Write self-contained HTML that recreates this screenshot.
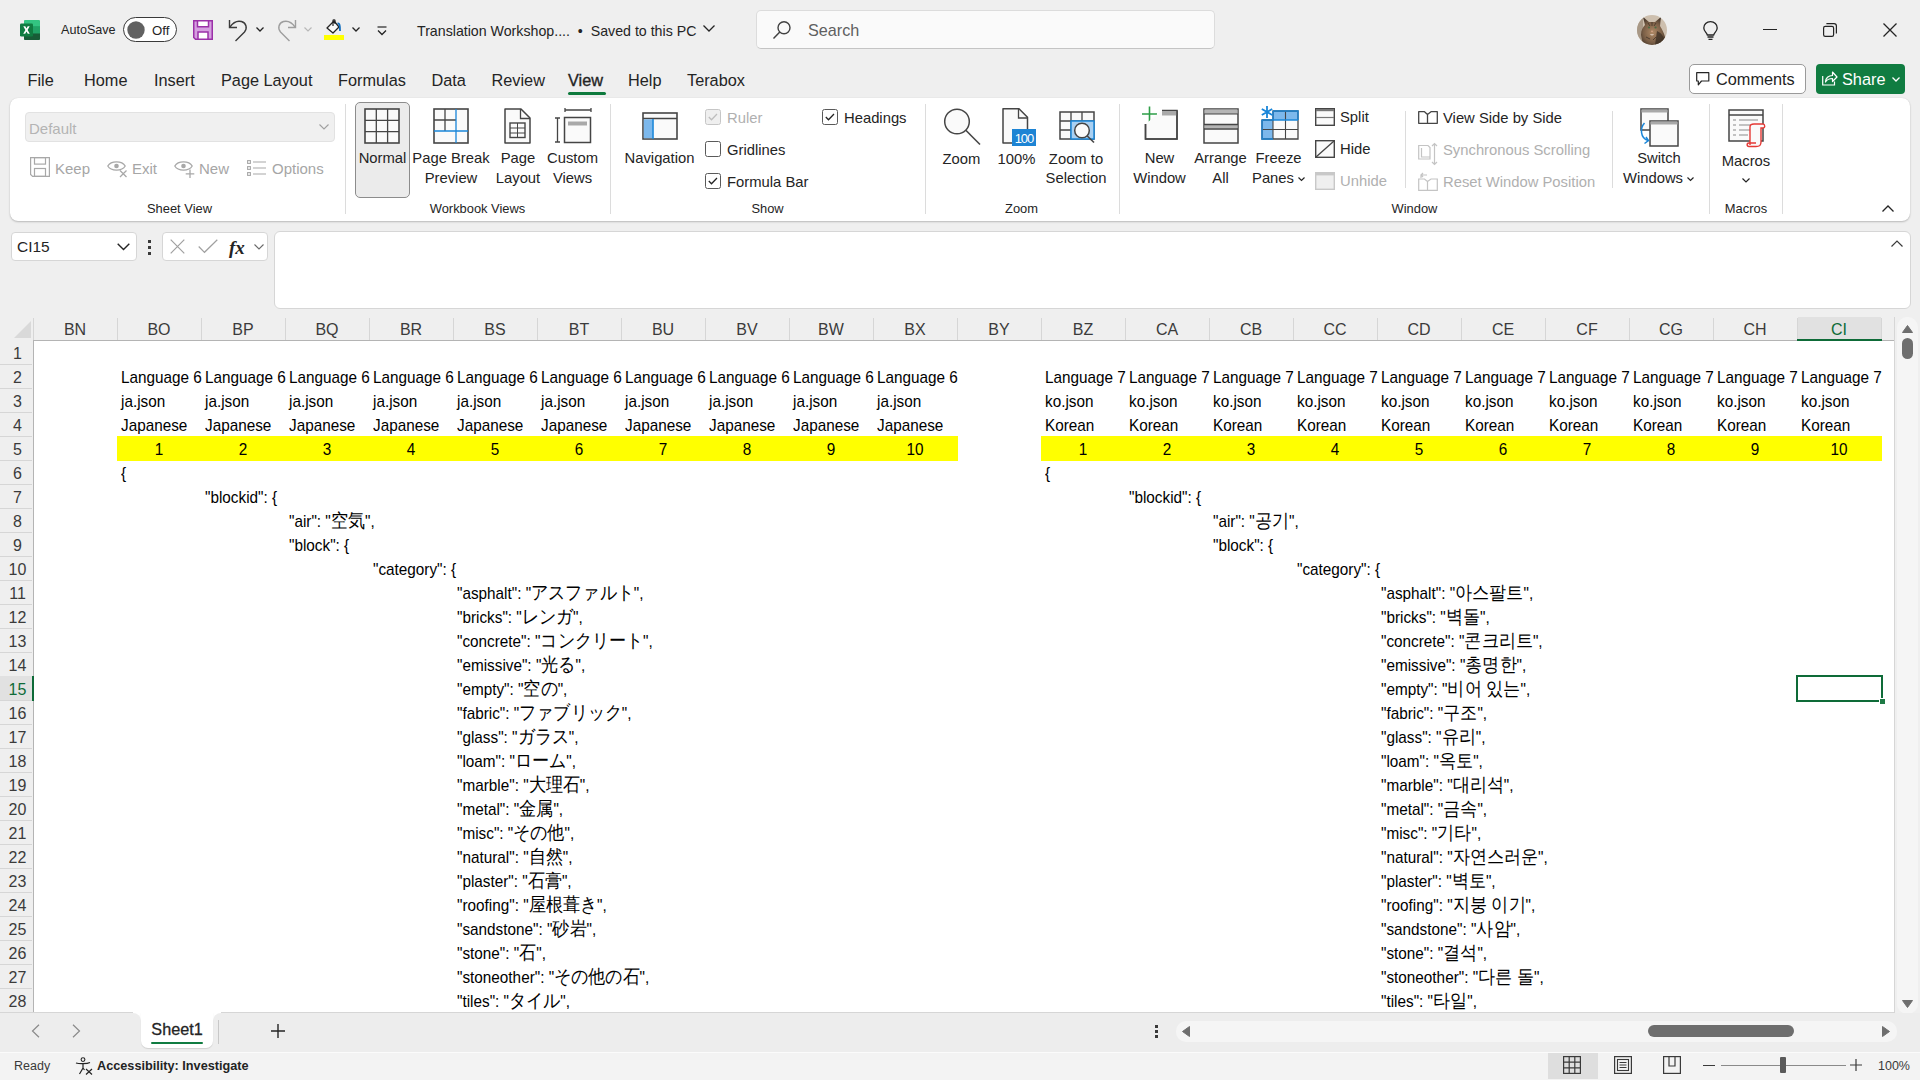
<!DOCTYPE html>
<html><head><meta charset="utf-8">
<style>
*{margin:0;padding:0;box-sizing:border-box}
html,body{width:1920px;height:1080px;overflow:hidden;background:#efefef;font-family:"Liberation Sans",sans-serif;color:#242424;position:relative}
.a{position:absolute}
.t{position:absolute;white-space:nowrap;line-height:1}
svg{position:absolute;overflow:visible}
.j{font-size:18.5px;line-height:0}
</style></head><body>

<svg style="left:20px;top:20px" width="20" height="20" viewBox="0 0 20 20">
<rect x="4" y="0" width="16" height="20" rx="1.6" fill="#21a366"/>
<path d="M5.6 0 H18.4 C19.3 0 20 0.7 20 1.6 V6.6 H4 V1.6 C4 0.7 4.7 0 5.6 0 Z" fill="#33c481"/>
<rect x="4" y="6.6" width="16" height="6.7" fill="#21a366"/>
<path d="M4 13.3 H20 V18.4 C20 19.3 19.3 20 18.4 20 H5.6 C4.7 20 4 19.3 4 18.4 Z" fill="#185c37"/>
<rect x="12" y="6.6" width="8" height="6.7" fill="#21a366"/>
<rect x="0" y="3.4" width="13" height="13.2" rx="1.3" fill="#107c41"/>
<path d="M3.3 6.3 H5.3 L6.5 8.6 L7.7 6.3 H9.7 L7.6 10 L9.8 13.7 H7.8 L6.5 11.4 L5.2 13.7 H3.2 L5.4 10 Z" fill="#fff"/>
</svg>
<div class="t" style="left:61px;top:24.3px;font-size:12.6px;color:#242424;">AutoSave</div>
<div class="a" style="left:123px;top:17px;width:54px;height:25px;border:1px solid #3a3a3a;border-radius:13px;background:#fff"></div>
<svg style="left:127px;top:21px" width="18" height="18" viewBox="0 0 18 18"><circle cx="9" cy="9" r="8.7" fill="#616161"/></svg>
<div class="t" style="left:152px;top:23.8px;font-size:13.2px;color:#242424;">Off</div>
<svg style="left:193px;top:20px" width="20" height="20" viewBox="0 0 20 20">
<path d="M0.75 0.75 H19.25 V19.25 H2.5 L0.75 17.5 Z" fill="#d59fe0" stroke="#9b30a8" stroke-width="1.5"/>
<rect x="4.5" y="0.75" width="11" height="6" fill="#fff" stroke="#9b30a8" stroke-width="1.5"/>
<rect x="5" y="12" width="10" height="7.25" fill="#fff" stroke="#9b30a8" stroke-width="1.5"/>
</svg>
<svg style="left:228px;top:19px" width="20" height="22" viewBox="0 0 20 22"><path d="M1.5 1 V8.5 H9" fill="none" stroke="#3b3b3b" stroke-width="1.4"/><path d="M2 8 C5 3.5 9.5 1.5 13.5 2.5 C18.5 4 19.5 9.5 16.5 13 L7.5 22" fill="none" stroke="#3b3b3b" stroke-width="1.4"/></svg>
<svg style="left:256px;top:27px" width="8" height="5" viewBox="0 0 8 5"><path d="M0.5 0.5 L4 4 L7.5 0.5" fill="none" stroke="#242424" stroke-width="1.3"/></svg>
<svg style="left:277px;top:19px" width="20" height="22" viewBox="0 0 20 22"><path d="M18.5 1 V8.5 H11" fill="none" stroke="#9e9e9e" stroke-width="1.4"/><path d="M18 8 C15 3.5 10.5 1.5 6.5 2.5 C1.5 4 0.5 9.5 3.5 13 L12.5 22" fill="none" stroke="#9e9e9e" stroke-width="1.4"/></svg>
<svg style="left:304px;top:27px" width="8" height="5" viewBox="0 0 8 5"><path d="M0.5 0.5 L4 4 L7.5 0.5" fill="none" stroke="#b8b8b8" stroke-width="1.2"/></svg>
<svg style="left:324px;top:19px" width="21" height="22" viewBox="0 0 21 22">
<path d="M3 9 L10 2 L15 8 L9 14 Z" fill="#fafafa" stroke="#242424" stroke-width="1.3" stroke-linejoin="round"/>
<path d="M9 7 V1.5 C9 0.5 11 0.5 11 1.5 V5" fill="none" stroke="#242424" stroke-width="1.2"/>
<path d="M13.5 4.5 C15.5 4 16 6 16 12" fill="none" stroke="#0f6cbd" stroke-width="1.8"/>
<rect x="0" y="16" width="20" height="5" fill="#ffff00"/>
</svg>
<svg style="left:352px;top:27px" width="8" height="5" viewBox="0 0 8 5"><path d="M0.5 0.5 L4 4 L7.5 0.5" fill="none" stroke="#242424" stroke-width="1.3"/></svg>
<svg style="left:377px;top:26px" width="10" height="10" viewBox="0 0 10 10"><path d="M0.5 1 H9.5" stroke="#242424" stroke-width="1.2"/><path d="M1 4.5 L5 8.5 L9 4.5" fill="none" stroke="#242424" stroke-width="1.3"/></svg>
<div class="t" style="left:417px;top:24.0px;font-size:14.2px;color:#242424;">Translation Workshop.... &nbsp;•&nbsp; Saved to this PC</div>
<svg style="left:703px;top:25px" width="12" height="7" viewBox="0 0 12 7"><path d="M0.5 0.5 L6 6 L11.5 0.5" fill="none" stroke="#242424" stroke-width="1.3"/></svg>
<div class="a" style="left:756px;top:10px;width:459px;height:39px;background:#fafafa;border:1px solid #dcdcdc;border-bottom-color:#c4c4c4;border-radius:5px"></div>
<svg style="left:773px;top:21px" width="18" height="18" viewBox="0 0 18 18"><circle cx="11" cy="6.8" r="6" fill="none" stroke="#424242" stroke-width="1.4"/><path d="M6.8 11 L0.5 17.5" stroke="#424242" stroke-width="1.5"/></svg>
<div class="t" style="left:808px;top:21.8px;font-size:16.2px;color:#5f5f5f;">Search</div>
<svg style="left:1637px;top:15px" width="30" height="30" viewBox="0 0 30 30"><defs><clipPath id="av"><circle cx="15" cy="15" r="15"/></clipPath>
<radialGradient id="cg" cx="45%" cy="55%" r="60%"><stop offset="0" stop-color="#b08a66"/><stop offset="0.6" stop-color="#7a5f47"/><stop offset="1" stop-color="#3c2f25"/></radialGradient></defs>
<g clip-path="url(#av)">
<rect width="30" height="30" fill="#cdbfae"/>
<rect x="0" y="0" width="6" height="30" fill="#a89886"/>
<path d="M6 30 L4 20 C4 15 6 12 8 10 L6 2 L12 7 L18 7 L24 2 L23 11 C25 14 27 18 28 22 L30 30 Z" fill="url(#cg)"/>
<path d="M20 16 C25 18 28 23 28 30 L18 30 Z" fill="#3a2d23" opacity=".75"/>
<circle cx="12" cy="12.5" r="1.1" fill="#4d6b45"/><circle cx="18.5" cy="12.5" r="1.1" fill="#4d6b45"/>
<path d="M15 15 L14 17 H16 Z" fill="#d9a68a"/>
<path d="M13 19 C14 21 16 21 17 19" fill="#e8dcd0" opacity=".7"/>
<path d="M11 8 L13 11 M15 7 V11 M19 8 L17 11 M9 22 L13 24 M19 22 L16 25" stroke="#3a2d23" stroke-width="1" opacity=".7"/>
</g></svg>
<svg style="left:1703px;top:21px" width="15" height="19" viewBox="0 0 15 19"><path d="M7.5 0.7 C3.5 0.7 0.8 3.6 0.8 7 C0.8 9.6 2.5 11 3.7 12.6 L4.3 14 H10.7 L11.3 12.6 C12.5 11 14.2 9.6 14.2 7 C14.2 3.6 11.5 0.7 7.5 0.7 Z" fill="none" stroke="#242424" stroke-width="1.3"/><path d="M4.5 16 H10.5 M5.5 18.3 H9.5" stroke="#242424" stroke-width="1.3"/></svg>
<div class="a" style="left:1763px;top:29px;width:14px;height:1.3px;background:#242424"></div>
<svg style="left:1823px;top:23px" width="14" height="14" viewBox="0 0 14 14"><rect x="0.6" y="3.4" width="10" height="10" rx="1.6" fill="none" stroke="#242424" stroke-width="1.2"/><path d="M3.4 0.6 H11 C12.3 0.6 13.4 1.7 13.4 3 V10.6" fill="none" stroke="#242424" stroke-width="1.2"/></svg>
<svg style="left:1883px;top:23px" width="14" height="14" viewBox="0 0 14 14"><path d="M0.5 0.5 L13.5 13.5 M13.5 0.5 L0.5 13.5" stroke="#242424" stroke-width="1.3"/></svg>
<div class="t" style="left:27.5px;top:72.2px;font-size:16.3px;color:#242424;">File</div>
<div class="t" style="left:84px;top:72.2px;font-size:16.3px;color:#242424;">Home</div>
<div class="t" style="left:154px;top:72.2px;font-size:16.3px;color:#242424;">Insert</div>
<div class="t" style="left:221px;top:72.2px;font-size:16.3px;color:#242424;">Page Layout</div>
<div class="t" style="left:338px;top:72.2px;font-size:16.3px;color:#242424;">Formulas</div>
<div class="t" style="left:431.5px;top:72.2px;font-size:16.3px;color:#242424;">Data</div>
<div class="t" style="left:491.5px;top:72.2px;font-size:16.3px;color:#242424;">Review</div>
<div class="t" style="left:568px;top:72.2px;font-size:16.3px;color:#242424;-webkit-text-stroke:0.35px #242424;">View</div>
<div class="t" style="left:628px;top:72.2px;font-size:16.3px;color:#242424;">Help</div>
<div class="t" style="left:687px;top:72.2px;font-size:16.3px;color:#242424;">Terabox</div>
<div class="a" style="left:568px;top:92px;width:38px;height:3px;background:#0e7a3d;border-radius:2px"></div>
<div class="a" style="left:1689px;top:64px;width:117px;height:30px;background:#fff;border:1px solid #9a9a9a;border-radius:5px"></div>
<svg style="left:1696px;top:72px" width="14" height="14" viewBox="0 0 14 14"><path d="M0.7 0.7 H12.8 V9 H5.5 L2.3 12.8 V9 H0.7 Z" fill="none" stroke="#242424" stroke-width="1.2" stroke-linejoin="round"/></svg>
<div class="t" style="left:1716px;top:71.2px;font-size:16.3px;color:#242424;">Comments</div>
<div class="a" style="left:1816px;top:64px;width:89px;height:30px;background:#107c41;border-radius:4px"></div>
<svg style="left:1822px;top:71px" width="16" height="15" viewBox="0 0 16 15"><path d="M0.7 5 V14 H12.5 V10.5" fill="none" stroke="#fff" stroke-width="1.2"/><path d="M3.5 11 C3.5 7 6.5 4.5 10.5 4.5 V1 L15 6 L10.5 10.5 V7.5 C7.5 7.5 5 8.5 3.5 11 Z" fill="none" stroke="#fff" stroke-width="1.2" stroke-linejoin="round"/></svg>
<div class="t" style="left:1842px;top:71.2px;font-size:16.3px;color:#fff;">Share</div>
<svg style="left:1892px;top:77px" width="8" height="5" viewBox="0 0 8 5"><path d="M0.5 0.5 L4 4 L7.5 0.5" fill="none" stroke="#fff" stroke-width="1.3"/></svg>
<div class="a" style="left:10px;top:98px;width:1900px;height:123px;background:#fff;border-radius:8px;box-shadow:0 1px 2px rgba(0,0,0,.22),0 0 1px rgba(0,0,0,.12)"></div>
<div class="a" style="left:25px;top:112px;width:310px;height:30px;background:#f0f0f0;border:1px solid #e2e2e2;border-radius:4px"></div>
<div class="t" style="left:29px;top:120.8px;font-size:15px;color:#b4b4b4;">Default</div>
<svg style="left:319px;top:124px" width="10" height="6" viewBox="0 0 10 6"><path d="M0.5 0.5 L5 5 L9.5 0.5" fill="none" stroke="#a0a0a0" stroke-width="1.1"/></svg>
<svg style="left:30px;top:157px" width="20" height="20" viewBox="0 0 20 20"><path d="M0.6 0.6 H19.4 V19.4 H2.6 L0.6 17.4 Z" fill="none" stroke="#a8a8a8" stroke-width="1.2"/><rect x="4.5" y="0.6" width="11" height="6.5" fill="none" stroke="#a8a8a8" stroke-width="1.2"/><rect x="4.5" y="11.5" width="11" height="7.9" fill="none" stroke="#a8a8a8" stroke-width="1.2"/></svg>
<div class="t" style="left:55px;top:160.8px;font-size:15px;color:#a6a6a6;">Keep</div>
<svg style="left:107px;top:160px" width="21" height="18" viewBox="0 0 21 18"><path d="M0.8 6 C4 0.5 15 0.5 18.2 6 C15 11.5 4 11.5 0.8 6 Z" fill="none" stroke="#a8a8a8" stroke-width="1.3"/><circle cx="9.5" cy="6" r="2.3" fill="#a8a8a8"/><path d="M13 10.5 L19.5 17 M19.5 10.5 L13 17" stroke="#a8a8a8" stroke-width="1.3"/></svg>
<div class="t" style="left:132px;top:160.8px;font-size:15px;color:#a6a6a6;">Exit</div>
<svg style="left:174px;top:160px" width="21" height="18" viewBox="0 0 21 18"><path d="M0.8 6 C4 0.5 15 0.5 18.2 6 C15 11.5 4 11.5 0.8 6 Z" fill="none" stroke="#a8a8a8" stroke-width="1.3"/><circle cx="9.5" cy="6" r="2.3" fill="#a8a8a8"/><path d="M16 9.5 V18 M11.7 13.8 H20.3" stroke="#a8a8a8" stroke-width="1.3"/></svg>
<div class="t" style="left:199px;top:160.8px;font-size:15px;color:#a6a6a6;">New</div>
<svg style="left:247px;top:160px" width="20" height="16" viewBox="0 0 20 16"><rect x="0.6" y="0.6" width="2.8" height="2.8" fill="none" stroke="#a8a8a8" stroke-width="1.1"/><rect x="0.6" y="6.6" width="2.8" height="2.8" fill="none" stroke="#a8a8a8" stroke-width="1.1"/><rect x="0.6" y="12.6" width="2.8" height="2.8" fill="none" stroke="#a8a8a8" stroke-width="1.1"/><path d="M6 2 H19 M6 8 H19 M6 14 H19" stroke="#a8a8a8" stroke-width="1.2"/></svg>
<div class="t" style="left:272px;top:160.8px;font-size:15px;color:#a6a6a6;">Options</div>
<div class="t" style="left:179.5px;top:203.1px;font-size:12.9px;color:#242424;transform:translateX(-50%);">Sheet View</div>
<div class="a" style="left:345px;top:104px;width:1px;height:110px;background:#dcdcdc"></div>
<div class="a" style="left:355px;top:102px;width:55px;height:96px;background:#ebebeb;border:1px solid #8c8c8c;border-radius:5px"></div>
<svg style="left:364px;top:108px" width="36" height="36" viewBox="0 0 36 36"><rect x="1" y="1" width="34" height="34" fill="#fafafa" stroke="#454545" stroke-width="1.6"/><path d="M12.3 1 V35 M23.6 1 V35 M1 12.3 H35 M1 23.6 H35" stroke="#454545" stroke-width="1.3"/></svg>
<div class="t" style="left:382.5px;top:151.1px;font-size:14.8px;color:#242424;transform:translateX(-50%);">Normal</div>
<svg style="left:433px;top:108px" width="36" height="36" viewBox="0 0 36 36"><rect x="1" y="1" width="34" height="34" fill="#fafafa" stroke="#454545" stroke-width="1.6"/><path d="M12 1 V23 M1 12 H23" stroke="#454545" stroke-width="1.3"/><path d="M23 1 V35 M1 23 H35" stroke="#1a86d9" stroke-width="1.3"/></svg>
<div class="t" style="left:451px;top:151.1px;font-size:14.8px;color:#242424;transform:translateX(-50%);">Page Break</div>
<div class="t" style="left:451px;top:171.0px;font-size:14.8px;color:#242424;transform:translateX(-50%);">Preview</div>
<svg style="left:504px;top:108px" width="27" height="36" viewBox="0 0 27 36"><path d="M1 1 H17 L26 10 V35 H1 Z" fill="#fafafa" stroke="#454545" stroke-width="1.5" stroke-linejoin="round"/><path d="M16.5 1 V10.5 H26" fill="none" stroke="#454545" stroke-width="1.3"/><rect x="6" y="15" width="15" height="14.5" fill="none" stroke="#454545" stroke-width="1.4"/><path d="M13.5 15 V29.5 M6 20 H21 M6 25 H21" stroke="#454545" stroke-width="1"/></svg>
<div class="t" style="left:518px;top:151.1px;font-size:14.8px;color:#242424;transform:translateX(-50%);">Page</div>
<div class="t" style="left:518px;top:171.0px;font-size:14.8px;color:#242424;transform:translateX(-50%);">Layout</div>
<svg style="left:555px;top:108px" width="37" height="37" viewBox="0 0 37 37"><path d="M10 2 H36 M10 0 V4 M36 0 V4" stroke="#454545" stroke-width="1.3"/><path d="M0 10 H5 M2.5 10 V34 M0 34 H5" stroke="#454545" stroke-width="1.3"/><rect x="9.5" y="9.5" width="26" height="25" fill="#fafafa" stroke="#454545" stroke-width="1.5"/><rect x="13" y="13.5" width="19" height="4" fill="#a9a9a9"/></svg>
<div class="t" style="left:572.5px;top:151.1px;font-size:14.8px;color:#242424;transform:translateX(-50%);">Custom</div>
<div class="t" style="left:572.5px;top:171.0px;font-size:14.8px;color:#242424;transform:translateX(-50%);">Views</div>
<div class="t" style="left:477.5px;top:202.6px;font-size:12.9px;color:#242424;transform:translateX(-50%);">Workbook Views</div>
<div class="a" style="left:610px;top:104px;width:1px;height:110px;background:#dcdcdc"></div>
<svg style="left:642px;top:112px" width="36" height="28" viewBox="0 0 36 28"><rect x="1" y="1" width="34" height="26" fill="#fafafa" stroke="#454545" stroke-width="1.6"/><path d="M1 6.5 H35" stroke="#454545" stroke-width="1.3"/><rect x="1.8" y="7.3" width="9" height="18.9" fill="#7cb8ec"/><path d="M11 7 V27" stroke="#1a86d9" stroke-width="1.6"/></svg>
<div class="t" style="left:659.5px;top:151.0px;font-size:14.8px;color:#242424;transform:translateX(-50%);">Navigation</div>
<svg style="left:705px;top:109px" width="16" height="16" viewBox="0 0 16 16"><rect x="0.5" y="0.5" width="15" height="15" rx="2" fill="#efefef" stroke="#c6c6c6" stroke-width="1"/><path d="M3.8 8 L6.5 10.7 L12 5" fill="none" stroke="#bdbdbd" stroke-width="1.3"/></svg>
<div class="t" style="left:727px;top:111.0px;font-size:14.8px;color:#b0b0b0;">Ruler</div>
<svg style="left:705px;top:141px" width="16" height="16" viewBox="0 0 16 16"><rect x="0.5" y="0.5" width="15" height="15" rx="2" fill="#fff" stroke="#5a5a5a" stroke-width="1"/></svg>
<div class="t" style="left:727px;top:142.5px;font-size:14.8px;color:#242424;">Gridlines</div>
<svg style="left:705px;top:173px" width="16" height="16" viewBox="0 0 16 16"><rect x="0.5" y="0.5" width="15" height="15" rx="2" fill="#fff" stroke="#5a5a5a" stroke-width="1"/><path d="M3.8 8 L6.5 10.7 L12 5" fill="none" stroke="#242424" stroke-width="1.3"/></svg>
<div class="t" style="left:727px;top:174.5px;font-size:14.8px;color:#242424;">Formula Bar</div>
<svg style="left:822px;top:109px" width="16" height="16" viewBox="0 0 16 16"><rect x="0.5" y="0.5" width="15" height="15" rx="2" fill="#fff" stroke="#5a5a5a" stroke-width="1"/><path d="M3.8 8 L6.5 10.7 L12 5" fill="none" stroke="#242424" stroke-width="1.3"/></svg>
<div class="t" style="left:844px;top:111.0px;font-size:14.8px;color:#242424;">Headings</div>
<div class="t" style="left:767.5px;top:202.6px;font-size:12.9px;color:#242424;transform:translateX(-50%);">Show</div>
<div class="a" style="left:925px;top:104px;width:1px;height:110px;background:#dcdcdc"></div>
<svg style="left:944px;top:108px" width="37" height="38" viewBox="0 0 37 38"><circle cx="13" cy="13.5" r="12.3" fill="#fafafa" stroke="#454545" stroke-width="1.5"/><path d="M21.8 22.3 L36 36.5" stroke="#454545" stroke-width="1.6"/></svg>
<div class="t" style="left:961.5px;top:151.5px;font-size:14.8px;color:#242424;transform:translateX(-50%);">Zoom</div>
<svg style="left:1002px;top:108px" width="35" height="40" viewBox="0 0 35 40"><path d="M1 0.8 H17 L25.5 9.3 V35 H1 Z" fill="#fafafa" stroke="#454545" stroke-width="1.5" stroke-linejoin="round"/><path d="M16.5 0.8 V10 H25.5" fill="none" stroke="#454545" stroke-width="1.3"/><rect x="10" y="21" width="24" height="17" fill="#1d84d4"/><text x="22" y="34.5" font-size="13" fill="#fff" text-anchor="middle" font-family="Liberation Sans" letter-spacing="-1">100</text></svg>
<div class="t" style="left:1016.5px;top:151.5px;font-size:14.8px;color:#242424;transform:translateX(-50%);">100%</div>
<svg style="left:1059px;top:111px" width="38" height="37" viewBox="0 0 38 37"><rect x="1" y="1" width="34" height="27" fill="#fafafa" stroke="#454545" stroke-width="1.5"/><path d="M12 1 V28 M23 1 V10 M1 10 H35 M1 19 H12" stroke="#454545" stroke-width="1.3"/><rect x="12" y="10" width="23" height="18" fill="#a9d0f2"/><path d="M12 10 H35 V28 H12 Z" fill="none" stroke="#1a86d9" stroke-width="1.5"/><circle cx="23" cy="19.5" r="7.3" fill="#fafafa" stroke="#454545" stroke-width="1.5"/><path d="M28.3 25 L35 31.5" stroke="#454545" stroke-width="1.6"/></svg>
<div class="t" style="left:1076px;top:151.5px;font-size:14.8px;color:#242424;transform:translateX(-50%);">Zoom to</div>
<div class="t" style="left:1076px;top:171.0px;font-size:14.8px;color:#242424;transform:translateX(-50%);">Selection</div>
<div class="t" style="left:1021.5px;top:202.6px;font-size:12.9px;color:#242424;transform:translateX(-50%);">Zoom</div>
<div class="a" style="left:1119px;top:104px;width:1px;height:110px;background:#dcdcdc"></div>
<svg style="left:1140px;top:106px" width="38" height="34" viewBox="0 0 38 34"><path d="M2 8 H17 M9.5 0.5 V16" stroke="#2e9e48" stroke-width="1.6"/><path d="M5.5 18 V33 H37 V4.5 H22" fill="#fafafa" stroke="#454545" stroke-width="1.5"/><rect x="22" y="5" width="15" height="4.5" fill="#a9a9a9"/><path d="M5.5 18 V33 H37 V4.5" fill="none" stroke="#454545" stroke-width="1.5"/></svg>
<div class="t" style="left:1159.5px;top:151.1px;font-size:14.8px;color:#242424;transform:translateX(-50%);">New</div>
<div class="t" style="left:1159.5px;top:171.1px;font-size:14.8px;color:#242424;transform:translateX(-50%);">Window</div>
<svg style="left:1203px;top:108px" width="36" height="36" viewBox="0 0 36 36"><rect x="1" y="1" width="34" height="34" fill="#fafafa" stroke="#454545" stroke-width="1.5"/><rect x="1.5" y="1.5" width="33" height="4.5" fill="#b5b5b5"/><path d="M1 6 H35" stroke="#454545" stroke-width="1.2"/><rect x="1.5" y="16.5" width="33" height="4" fill="#b5b5b5"/><path d="M1 16.5 H35 M1 21 H35" stroke="#454545" stroke-width="1.3"/></svg>
<div class="t" style="left:1220.5px;top:151.1px;font-size:14.8px;color:#242424;transform:translateX(-50%);">Arrange</div>
<div class="t" style="left:1220.5px;top:171.1px;font-size:14.8px;color:#242424;transform:translateX(-50%);">All</div>
<svg style="left:1260px;top:105px" width="39" height="36" viewBox="0 0 39 36"><rect x="13" y="6" width="25" height="28" fill="#fafafa"/><rect x="13" y="6" width="25" height="9" fill="#7cb8ec"/><rect x="2" y="15" width="11" height="19" fill="#7cb8ec"/><path d="M13 6 H38 V34 H2 V15 H13 Z" fill="none" stroke="#454545" stroke-width="1.3"/><path d="M25.5 6 V34 M2 24.5 H38 M13 15 V34" stroke="#454545" stroke-width="1.1"/><path d="M2 15 H38 M13 6 V15" stroke="#1a86d9" stroke-width="1.4"/><path d="M2 15 V34 H13 M13 6 H38 V15" fill="none" stroke="#1a86d9" stroke-width="1.4"/><path d="M7 1 V13 M1.8 4 L12.2 10 M1.8 10 L12.2 4" stroke="#1a86d9" stroke-width="1.8"/></svg>
<div class="t" style="left:1278.5px;top:151.1px;font-size:14.8px;color:#242424;transform:translateX(-50%);">Freeze</div>
<div class="t" style="left:1273px;top:171.1px;font-size:14.8px;color:#242424;transform:translateX(-50%);">Panes</div>
<svg style="left:1298px;top:177px" width="7" height="5" viewBox="0 0 7 5"><path d="M0.5 0.5 L3.5 3.5 L6.5 0.5" fill="none" stroke="#242424" stroke-width="1.2"/></svg>
<svg style="left:1315px;top:108px" width="20" height="18" viewBox="0 0 20 18"><rect x="0.7" y="0.7" width="18.6" height="16.6" fill="#fafafa" stroke="#454545" stroke-width="1.4"/><rect x="1" y="1" width="18" height="2.2" fill="#777"/><path d="M1 9.5 H19" stroke="#777" stroke-width="1.2"/></svg>
<div class="t" style="left:1340px;top:110.0px;font-size:14.8px;color:#242424;">Split</div>
<svg style="left:1315px;top:140px" width="20" height="18" viewBox="0 0 20 18"><rect x="0.7" y="0.7" width="18.6" height="16.6" fill="#fafafa" stroke="#454545" stroke-width="1.4"/><path d="M1 17 L19 1" stroke="#454545" stroke-width="1.3"/></svg>
<div class="t" style="left:1340px;top:142.0px;font-size:14.8px;color:#242424;">Hide</div>
<svg style="left:1315px;top:172px" width="20" height="18" viewBox="0 0 20 18"><rect x="0.7" y="0.7" width="18.6" height="16.6" fill="#efefef" stroke="#c8c8c8" stroke-width="1.4"/><rect x="1" y="1" width="18" height="2.4" fill="#c8c8c8"/></svg>
<div class="t" style="left:1340px;top:174.0px;font-size:14.8px;color:#b0b0b0;">Unhide</div>
<div class="a" style="left:1405px;top:111px;width:1px;height:77px;background:#dcdcdc"></div>
<svg style="left:1418px;top:111px" width="20" height="13" viewBox="0 0 20 13"><path d="M0.7 0.7 H6.5 L9.5 3.5 V12.3 H0.7 Z M9.5 3.5 V12.3 H19.3 V0.7 H13 L9.5 3.5" fill="none" stroke="#454545" stroke-width="1.3" stroke-linejoin="round"/></svg>
<div class="t" style="left:1443px;top:111.0px;font-size:14.8px;color:#242424;">View Side by Side</div>
<svg style="left:1418px;top:143px" width="20" height="22" viewBox="0 0 20 22"><path d="M0.7 2.5 H10 L12 4.5 V16 H0.7 Z" fill="none" stroke="#c4c4c4" stroke-width="1.2"/><path d="M3.5 5 V14 H12" fill="none" stroke="#c4c4c4" stroke-width="1.2"/><path d="M16.5 0.5 V21.5 M14 3 L16.5 0.5 L19 3 M14 19 L16.5 21.5 L19 19" fill="none" stroke="#c4c4c4" stroke-width="1.2"/></svg>
<div class="t" style="left:1443px;top:142.5px;font-size:14.8px;color:#b0b0b0;">Synchronous Scrolling</div>
<svg style="left:1418px;top:173px" width="20" height="18" viewBox="0 0 20 18"><path d="M0.7 6 H6.5 L9.5 8.5 V17.3 H0.7 Z M9.5 8.5 V17.3 H19.3 V6 H13 L9.5 8.5" fill="none" stroke="#c4c4c4" stroke-width="1.2"/><path d="M3 5 V2 H9 M5 0 L3 2 L5 4" fill="none" stroke="#c4c4c4" stroke-width="1.2"/></svg>
<div class="t" style="left:1443px;top:174.5px;font-size:14.8px;color:#b0b0b0;">Reset Window Position</div>
<div class="a" style="left:1612px;top:111px;width:1px;height:77px;background:#dcdcdc"></div>
<svg style="left:1640px;top:108px" width="39" height="40" viewBox="0 0 39 40"><rect x="1" y="1" width="27" height="21" fill="#fafafa" stroke="#454545" stroke-width="1.5"/><rect x="1.5" y="1.5" width="26" height="3" fill="#a9a9a9"/><rect x="10" y="13" width="28" height="25" fill="#fafafa" stroke="#454545" stroke-width="1.5"/><rect x="10.5" y="13.5" width="27" height="3" fill="#a9a9a9"/><path d="M4.5 15 C0 20 0 30 8 32.5 M6 29 L8.5 32.5 L4.5 35.5" fill="none" stroke="#1a86d9" stroke-width="1.5"/></svg>
<div class="t" style="left:1659px;top:151.1px;font-size:14.8px;color:#242424;transform:translateX(-50%);">Switch</div>
<div class="t" style="left:1653px;top:171.1px;font-size:14.8px;color:#242424;transform:translateX(-50%);">Windows</div>
<svg style="left:1687px;top:177px" width="7" height="5" viewBox="0 0 7 5"><path d="M0.5 0.5 L3.5 3.5 L6.5 0.5" fill="none" stroke="#242424" stroke-width="1.2"/></svg>
<div class="t" style="left:1414.5px;top:202.6px;font-size:12.9px;color:#242424;transform:translateX(-50%);">Window</div>
<div class="a" style="left:1709px;top:104px;width:1px;height:110px;background:#dcdcdc"></div>
<svg style="left:1728px;top:109px" width="38" height="38" viewBox="0 0 38 38"><rect x="1" y="1" width="34" height="31" fill="#fafafa" stroke="#454545" stroke-width="1.5"/><path d="M1 6 H35" stroke="#454545" stroke-width="1.3"/><path d="M5 11 H8 M11 11 H30 M5 16 H8 M11 16 H27 M5 21 H8 M11 21 H22 M5 26 H8 M11 26 H20" stroke="#8a8a8a" stroke-width="1.2"/><path d="M22 36 V18 C22 16 24 15 26 15 H35 C37 15 37.5 19 35 19 H33 V33 C33 37 31 37.5 28 37.5 H21 C18.5 37.5 18.5 34 21 34 H28" fill="#fafafa" stroke="#e53935" stroke-width="1.4"/></svg>
<div class="t" style="left:1746px;top:154.0px;font-size:14.8px;color:#242424;transform:translateX(-50%);">Macros</div>
<svg style="left:1742px;top:178px" width="8" height="5" viewBox="0 0 8 5"><path d="M0.5 0.5 L4 4 L7.5 0.5" fill="none" stroke="#242424" stroke-width="1.2"/></svg>
<div class="t" style="left:1746px;top:202.6px;font-size:12.9px;color:#242424;transform:translateX(-50%);">Macros</div>
<div class="a" style="left:1782px;top:104px;width:1px;height:110px;background:#dcdcdc"></div>
<svg style="left:1882px;top:205px" width="12" height="7" viewBox="0 0 12 7"><path d="M0.5 6.5 L6 1 L11.5 6.5" fill="none" stroke="#242424" stroke-width="1.3"/></svg>
<div class="a" style="left:11px;top:232px;width:126px;height:29px;background:#fff;border:1px solid #d6d6d6;border-radius:4px"></div>
<div class="t" style="left:17px;top:238.9px;font-size:15.5px;color:#242424;">CI15</div>
<svg style="left:117px;top:243px" width="13" height="8" viewBox="0 0 13 8"><path d="M0.7 0.7 L6.5 6.5 L12.3 0.7" fill="none" stroke="#242424" stroke-width="1.4"/></svg>
<div class="a" style="left:148px;top:240px;width:3px;height:3px;background:#3a3a3a"></div>
<div class="a" style="left:148px;top:246px;width:3px;height:3px;background:#3a3a3a"></div>
<div class="a" style="left:148px;top:252px;width:3px;height:3px;background:#3a3a3a"></div>
<div class="a" style="left:162px;top:232px;width:106px;height:29px;background:#fff;border:1px solid #d6d6d6;border-radius:4px"></div>
<svg style="left:170px;top:239px" width="15" height="15" viewBox="0 0 15 15"><path d="M0.7 0.7 L14.3 14.3 M14.3 0.7 L0.7 14.3" stroke="#a0a0a0" stroke-width="1.2"/></svg>
<svg style="left:198px;top:239px" width="20" height="14" viewBox="0 0 20 14"><path d="M0.7 7.5 L6.5 13.3 L19.3 0.7" fill="none" stroke="#a0a0a0" stroke-width="1.2"/></svg>
<div class="t" style="left:229px;top:237.9px;font-size:19px;color:#242424;font-family:'Liberation Serif',serif;font-weight:700;"><i>fx</i></div>
<svg style="left:254px;top:244px" width="10" height="6" viewBox="0 0 10 6"><path d="M0.5 0.5 L5 5 L9.5 0.5" fill="none" stroke="#6a6a6a" stroke-width="1.1"/></svg>
<div class="a" style="left:274px;top:231px;width:1637px;height:78px;background:#fff;border:1px solid #d6d6d6;border-radius:6px"></div>
<svg style="left:1891px;top:240px" width="12" height="7" viewBox="0 0 12 7"><path d="M0.5 6.5 L6 1 L11.5 6.5" fill="none" stroke="#3a3a3a" stroke-width="1.2"/></svg>
<div class="a" style="left:0px;top:317px;width:1894px;height:23px;background:#efefef"></div>
<div class="a" style="left:34px;top:341px;width:1860px;height:671px;background:#fff"></div>
<div class="a" style="left:33px;top:318px;width:1px;height:22px;background:#d6d6d6"></div>
<div class="a" style="left:117px;top:318px;width:1px;height:22px;background:#d6d6d6"></div>
<div class="a" style="left:201px;top:318px;width:1px;height:22px;background:#d6d6d6"></div>
<div class="a" style="left:285px;top:318px;width:1px;height:22px;background:#d6d6d6"></div>
<div class="a" style="left:369px;top:318px;width:1px;height:22px;background:#d6d6d6"></div>
<div class="a" style="left:453px;top:318px;width:1px;height:22px;background:#d6d6d6"></div>
<div class="a" style="left:537px;top:318px;width:1px;height:22px;background:#d6d6d6"></div>
<div class="a" style="left:621px;top:318px;width:1px;height:22px;background:#d6d6d6"></div>
<div class="a" style="left:705px;top:318px;width:1px;height:22px;background:#d6d6d6"></div>
<div class="a" style="left:789px;top:318px;width:1px;height:22px;background:#d6d6d6"></div>
<div class="a" style="left:873px;top:318px;width:1px;height:22px;background:#d6d6d6"></div>
<div class="a" style="left:957px;top:318px;width:1px;height:22px;background:#d6d6d6"></div>
<div class="a" style="left:1041px;top:318px;width:1px;height:22px;background:#d6d6d6"></div>
<div class="a" style="left:1125px;top:318px;width:1px;height:22px;background:#d6d6d6"></div>
<div class="a" style="left:1209px;top:318px;width:1px;height:22px;background:#d6d6d6"></div>
<div class="a" style="left:1293px;top:318px;width:1px;height:22px;background:#d6d6d6"></div>
<div class="a" style="left:1377px;top:318px;width:1px;height:22px;background:#d6d6d6"></div>
<div class="a" style="left:1461px;top:318px;width:1px;height:22px;background:#d6d6d6"></div>
<div class="a" style="left:1545px;top:318px;width:1px;height:22px;background:#d6d6d6"></div>
<div class="a" style="left:1629px;top:318px;width:1px;height:22px;background:#d6d6d6"></div>
<div class="a" style="left:1713px;top:318px;width:1px;height:22px;background:#d6d6d6"></div>
<div class="a" style="left:1797px;top:318px;width:1px;height:22px;background:#d6d6d6"></div>
<div class="a" style="left:1881px;top:318px;width:1px;height:22px;background:#d6d6d6"></div>
<div class="a" style="left:1798px;top:317px;width:83px;height:22px;background:#e1e1e1"></div>
<div class="a" style="left:1797px;top:339px;width:85px;height:2px;background:#0e6b38"></div>
<div class="a" style="left:33px;top:340px;width:1861px;height:1px;background:#b4b4b4"></div>
<div class="a" style="left:1797px;top:339px;width:85px;height:2px;background:#0e6b38"></div>
<div class="t" style="left:75.0px;top:321.5px;font-size:16px;color:#3b3b3b;transform:translateX(-50%);">BN</div>
<div class="t" style="left:159.0px;top:321.5px;font-size:16px;color:#3b3b3b;transform:translateX(-50%);">BO</div>
<div class="t" style="left:243.0px;top:321.5px;font-size:16px;color:#3b3b3b;transform:translateX(-50%);">BP</div>
<div class="t" style="left:327.0px;top:321.5px;font-size:16px;color:#3b3b3b;transform:translateX(-50%);">BQ</div>
<div class="t" style="left:411.0px;top:321.5px;font-size:16px;color:#3b3b3b;transform:translateX(-50%);">BR</div>
<div class="t" style="left:495.0px;top:321.5px;font-size:16px;color:#3b3b3b;transform:translateX(-50%);">BS</div>
<div class="t" style="left:579.0px;top:321.5px;font-size:16px;color:#3b3b3b;transform:translateX(-50%);">BT</div>
<div class="t" style="left:663.0px;top:321.5px;font-size:16px;color:#3b3b3b;transform:translateX(-50%);">BU</div>
<div class="t" style="left:747.0px;top:321.5px;font-size:16px;color:#3b3b3b;transform:translateX(-50%);">BV</div>
<div class="t" style="left:831.0px;top:321.5px;font-size:16px;color:#3b3b3b;transform:translateX(-50%);">BW</div>
<div class="t" style="left:915.0px;top:321.5px;font-size:16px;color:#3b3b3b;transform:translateX(-50%);">BX</div>
<div class="t" style="left:999.0px;top:321.5px;font-size:16px;color:#3b3b3b;transform:translateX(-50%);">BY</div>
<div class="t" style="left:1083.0px;top:321.5px;font-size:16px;color:#3b3b3b;transform:translateX(-50%);">BZ</div>
<div class="t" style="left:1167.0px;top:321.5px;font-size:16px;color:#3b3b3b;transform:translateX(-50%);">CA</div>
<div class="t" style="left:1251.0px;top:321.5px;font-size:16px;color:#3b3b3b;transform:translateX(-50%);">CB</div>
<div class="t" style="left:1335.0px;top:321.5px;font-size:16px;color:#3b3b3b;transform:translateX(-50%);">CC</div>
<div class="t" style="left:1419.0px;top:321.5px;font-size:16px;color:#3b3b3b;transform:translateX(-50%);">CD</div>
<div class="t" style="left:1503.0px;top:321.5px;font-size:16px;color:#3b3b3b;transform:translateX(-50%);">CE</div>
<div class="t" style="left:1587.0px;top:321.5px;font-size:16px;color:#3b3b3b;transform:translateX(-50%);">CF</div>
<div class="t" style="left:1671.0px;top:321.5px;font-size:16px;color:#3b3b3b;transform:translateX(-50%);">CG</div>
<div class="t" style="left:1755.0px;top:321.5px;font-size:16px;color:#3b3b3b;transform:translateX(-50%);">CH</div>
<div class="t" style="left:1839.0px;top:321.5px;font-size:16px;color:#0e6b38;transform:translateX(-50%);">CI</div>
<svg style="left:14px;top:321px" width="17" height="17" viewBox="0 0 17 17"><path d="M17 0 L17 17 L0 17 Z" fill="#d9d9d9"/></svg>
<div class="a" style="left:0px;top:340px;width:33px;height:672px;background:#efefef"></div>
<div class="a" style="left:33px;top:340px;width:1px;height:672px;background:#b4b4b4"></div>
<div class="a" style="left:0px;top:364px;width:32px;height:1px;background:#d6d6d6"></div>
<div class="t" style="left:17.5px;top:345.5px;font-size:16px;color:#3b3b3b;transform:translateX(-50%);">1</div>
<div class="a" style="left:0px;top:388px;width:32px;height:1px;background:#d6d6d6"></div>
<div class="t" style="left:17.5px;top:369.5px;font-size:16px;color:#3b3b3b;transform:translateX(-50%);">2</div>
<div class="a" style="left:0px;top:412px;width:32px;height:1px;background:#d6d6d6"></div>
<div class="t" style="left:17.5px;top:393.5px;font-size:16px;color:#3b3b3b;transform:translateX(-50%);">3</div>
<div class="a" style="left:0px;top:436px;width:32px;height:1px;background:#d6d6d6"></div>
<div class="t" style="left:17.5px;top:417.5px;font-size:16px;color:#3b3b3b;transform:translateX(-50%);">4</div>
<div class="a" style="left:0px;top:460px;width:32px;height:1px;background:#d6d6d6"></div>
<div class="t" style="left:17.5px;top:441.5px;font-size:16px;color:#3b3b3b;transform:translateX(-50%);">5</div>
<div class="a" style="left:0px;top:484px;width:32px;height:1px;background:#d6d6d6"></div>
<div class="t" style="left:17.5px;top:465.5px;font-size:16px;color:#3b3b3b;transform:translateX(-50%);">6</div>
<div class="a" style="left:0px;top:508px;width:32px;height:1px;background:#d6d6d6"></div>
<div class="t" style="left:17.5px;top:489.5px;font-size:16px;color:#3b3b3b;transform:translateX(-50%);">7</div>
<div class="a" style="left:0px;top:532px;width:32px;height:1px;background:#d6d6d6"></div>
<div class="t" style="left:17.5px;top:513.5px;font-size:16px;color:#3b3b3b;transform:translateX(-50%);">8</div>
<div class="a" style="left:0px;top:556px;width:32px;height:1px;background:#d6d6d6"></div>
<div class="t" style="left:17.5px;top:537.5px;font-size:16px;color:#3b3b3b;transform:translateX(-50%);">9</div>
<div class="a" style="left:0px;top:580px;width:32px;height:1px;background:#d6d6d6"></div>
<div class="t" style="left:17.5px;top:561.5px;font-size:16px;color:#3b3b3b;transform:translateX(-50%);">10</div>
<div class="a" style="left:0px;top:604px;width:32px;height:1px;background:#d6d6d6"></div>
<div class="t" style="left:17.5px;top:585.5px;font-size:16px;color:#3b3b3b;transform:translateX(-50%);">11</div>
<div class="a" style="left:0px;top:628px;width:32px;height:1px;background:#d6d6d6"></div>
<div class="t" style="left:17.5px;top:609.5px;font-size:16px;color:#3b3b3b;transform:translateX(-50%);">12</div>
<div class="a" style="left:0px;top:652px;width:32px;height:1px;background:#d6d6d6"></div>
<div class="t" style="left:17.5px;top:633.5px;font-size:16px;color:#3b3b3b;transform:translateX(-50%);">13</div>
<div class="a" style="left:0px;top:676px;width:32px;height:1px;background:#d6d6d6"></div>
<div class="t" style="left:17.5px;top:657.5px;font-size:16px;color:#3b3b3b;transform:translateX(-50%);">14</div>
<div class="a" style="left:0px;top:676px;width:33px;height:24px;background:#e1e1e1"></div>
<div class="a" style="left:32px;top:676px;width:2px;height:25px;background:#0e6b38"></div>
<div class="a" style="left:0px;top:700px;width:32px;height:1px;background:#d6d6d6"></div>
<div class="t" style="left:17.5px;top:681.5px;font-size:16px;color:#0e6b38;transform:translateX(-50%);">15</div>
<div class="a" style="left:0px;top:724px;width:32px;height:1px;background:#d6d6d6"></div>
<div class="t" style="left:17.5px;top:705.5px;font-size:16px;color:#3b3b3b;transform:translateX(-50%);">16</div>
<div class="a" style="left:0px;top:748px;width:32px;height:1px;background:#d6d6d6"></div>
<div class="t" style="left:17.5px;top:729.5px;font-size:16px;color:#3b3b3b;transform:translateX(-50%);">17</div>
<div class="a" style="left:0px;top:772px;width:32px;height:1px;background:#d6d6d6"></div>
<div class="t" style="left:17.5px;top:753.5px;font-size:16px;color:#3b3b3b;transform:translateX(-50%);">18</div>
<div class="a" style="left:0px;top:796px;width:32px;height:1px;background:#d6d6d6"></div>
<div class="t" style="left:17.5px;top:777.5px;font-size:16px;color:#3b3b3b;transform:translateX(-50%);">19</div>
<div class="a" style="left:0px;top:820px;width:32px;height:1px;background:#d6d6d6"></div>
<div class="t" style="left:17.5px;top:801.5px;font-size:16px;color:#3b3b3b;transform:translateX(-50%);">20</div>
<div class="a" style="left:0px;top:844px;width:32px;height:1px;background:#d6d6d6"></div>
<div class="t" style="left:17.5px;top:825.5px;font-size:16px;color:#3b3b3b;transform:translateX(-50%);">21</div>
<div class="a" style="left:0px;top:868px;width:32px;height:1px;background:#d6d6d6"></div>
<div class="t" style="left:17.5px;top:849.5px;font-size:16px;color:#3b3b3b;transform:translateX(-50%);">22</div>
<div class="a" style="left:0px;top:892px;width:32px;height:1px;background:#d6d6d6"></div>
<div class="t" style="left:17.5px;top:873.5px;font-size:16px;color:#3b3b3b;transform:translateX(-50%);">23</div>
<div class="a" style="left:0px;top:916px;width:32px;height:1px;background:#d6d6d6"></div>
<div class="t" style="left:17.5px;top:897.5px;font-size:16px;color:#3b3b3b;transform:translateX(-50%);">24</div>
<div class="a" style="left:0px;top:940px;width:32px;height:1px;background:#d6d6d6"></div>
<div class="t" style="left:17.5px;top:921.5px;font-size:16px;color:#3b3b3b;transform:translateX(-50%);">25</div>
<div class="a" style="left:0px;top:964px;width:32px;height:1px;background:#d6d6d6"></div>
<div class="t" style="left:17.5px;top:945.5px;font-size:16px;color:#3b3b3b;transform:translateX(-50%);">26</div>
<div class="a" style="left:0px;top:988px;width:32px;height:1px;background:#d6d6d6"></div>
<div class="t" style="left:17.5px;top:969.5px;font-size:16px;color:#3b3b3b;transform:translateX(-50%);">27</div>
<div class="a" style="left:0px;top:1012px;width:32px;height:1px;background:#d6d6d6"></div>
<div class="t" style="left:17.5px;top:993.5px;font-size:16px;color:#3b3b3b;transform:translateX(-50%);">28</div>
<div class="a" style="left:1894px;top:317px;width:1px;height:695px;background:#d6d6d6"></div>
<div class="a" style="left:0px;top:1012px;width:1895px;height:1px;background:#d6d6d6"></div>
<div class="a" style="left:117px;top:436px;width:841px;height:25px;background:#ffff00"></div>
<div class="a" style="left:1041px;top:436px;width:841px;height:25px;background:#ffff00"></div>
<div class="t" style="left:121px;top:368.9px;font-size:17px;color:#000;transform:scaleX(0.9);transform-origin:0 0;">Language 6</div>
<div class="t" style="left:121px;top:392.9px;font-size:17px;color:#000;transform:scaleX(0.9);transform-origin:0 0;">ja.json</div>
<div class="t" style="left:121px;top:416.9px;font-size:17px;color:#000;transform:scaleX(0.9);transform-origin:0 0;">Japanese</div>
<div class="t" style="left:159.0px;top:440.9px;font-size:17px;color:#000;transform:translateX(-50%) scaleX(0.9);">1</div>
<div class="t" style="left:205px;top:368.9px;font-size:17px;color:#000;transform:scaleX(0.9);transform-origin:0 0;">Language 6</div>
<div class="t" style="left:205px;top:392.9px;font-size:17px;color:#000;transform:scaleX(0.9);transform-origin:0 0;">ja.json</div>
<div class="t" style="left:205px;top:416.9px;font-size:17px;color:#000;transform:scaleX(0.9);transform-origin:0 0;">Japanese</div>
<div class="t" style="left:243.0px;top:440.9px;font-size:17px;color:#000;transform:translateX(-50%) scaleX(0.9);">2</div>
<div class="t" style="left:289px;top:368.9px;font-size:17px;color:#000;transform:scaleX(0.9);transform-origin:0 0;">Language 6</div>
<div class="t" style="left:289px;top:392.9px;font-size:17px;color:#000;transform:scaleX(0.9);transform-origin:0 0;">ja.json</div>
<div class="t" style="left:289px;top:416.9px;font-size:17px;color:#000;transform:scaleX(0.9);transform-origin:0 0;">Japanese</div>
<div class="t" style="left:327.0px;top:440.9px;font-size:17px;color:#000;transform:translateX(-50%) scaleX(0.9);">3</div>
<div class="t" style="left:373px;top:368.9px;font-size:17px;color:#000;transform:scaleX(0.9);transform-origin:0 0;">Language 6</div>
<div class="t" style="left:373px;top:392.9px;font-size:17px;color:#000;transform:scaleX(0.9);transform-origin:0 0;">ja.json</div>
<div class="t" style="left:373px;top:416.9px;font-size:17px;color:#000;transform:scaleX(0.9);transform-origin:0 0;">Japanese</div>
<div class="t" style="left:411.0px;top:440.9px;font-size:17px;color:#000;transform:translateX(-50%) scaleX(0.9);">4</div>
<div class="t" style="left:457px;top:368.9px;font-size:17px;color:#000;transform:scaleX(0.9);transform-origin:0 0;">Language 6</div>
<div class="t" style="left:457px;top:392.9px;font-size:17px;color:#000;transform:scaleX(0.9);transform-origin:0 0;">ja.json</div>
<div class="t" style="left:457px;top:416.9px;font-size:17px;color:#000;transform:scaleX(0.9);transform-origin:0 0;">Japanese</div>
<div class="t" style="left:495.0px;top:440.9px;font-size:17px;color:#000;transform:translateX(-50%) scaleX(0.9);">5</div>
<div class="t" style="left:541px;top:368.9px;font-size:17px;color:#000;transform:scaleX(0.9);transform-origin:0 0;">Language 6</div>
<div class="t" style="left:541px;top:392.9px;font-size:17px;color:#000;transform:scaleX(0.9);transform-origin:0 0;">ja.json</div>
<div class="t" style="left:541px;top:416.9px;font-size:17px;color:#000;transform:scaleX(0.9);transform-origin:0 0;">Japanese</div>
<div class="t" style="left:579.0px;top:440.9px;font-size:17px;color:#000;transform:translateX(-50%) scaleX(0.9);">6</div>
<div class="t" style="left:625px;top:368.9px;font-size:17px;color:#000;transform:scaleX(0.9);transform-origin:0 0;">Language 6</div>
<div class="t" style="left:625px;top:392.9px;font-size:17px;color:#000;transform:scaleX(0.9);transform-origin:0 0;">ja.json</div>
<div class="t" style="left:625px;top:416.9px;font-size:17px;color:#000;transform:scaleX(0.9);transform-origin:0 0;">Japanese</div>
<div class="t" style="left:663.0px;top:440.9px;font-size:17px;color:#000;transform:translateX(-50%) scaleX(0.9);">7</div>
<div class="t" style="left:709px;top:368.9px;font-size:17px;color:#000;transform:scaleX(0.9);transform-origin:0 0;">Language 6</div>
<div class="t" style="left:709px;top:392.9px;font-size:17px;color:#000;transform:scaleX(0.9);transform-origin:0 0;">ja.json</div>
<div class="t" style="left:709px;top:416.9px;font-size:17px;color:#000;transform:scaleX(0.9);transform-origin:0 0;">Japanese</div>
<div class="t" style="left:747.0px;top:440.9px;font-size:17px;color:#000;transform:translateX(-50%) scaleX(0.9);">8</div>
<div class="t" style="left:793px;top:368.9px;font-size:17px;color:#000;transform:scaleX(0.9);transform-origin:0 0;">Language 6</div>
<div class="t" style="left:793px;top:392.9px;font-size:17px;color:#000;transform:scaleX(0.9);transform-origin:0 0;">ja.json</div>
<div class="t" style="left:793px;top:416.9px;font-size:17px;color:#000;transform:scaleX(0.9);transform-origin:0 0;">Japanese</div>
<div class="t" style="left:831.0px;top:440.9px;font-size:17px;color:#000;transform:translateX(-50%) scaleX(0.9);">9</div>
<div class="t" style="left:877px;top:368.9px;font-size:17px;color:#000;transform:scaleX(0.9);transform-origin:0 0;">Language 6</div>
<div class="t" style="left:877px;top:392.9px;font-size:17px;color:#000;transform:scaleX(0.9);transform-origin:0 0;">ja.json</div>
<div class="t" style="left:877px;top:416.9px;font-size:17px;color:#000;transform:scaleX(0.9);transform-origin:0 0;">Japanese</div>
<div class="t" style="left:915.0px;top:440.9px;font-size:17px;color:#000;transform:translateX(-50%) scaleX(0.9);">10</div>
<div class="t" style="left:1045px;top:368.9px;font-size:17px;color:#000;transform:scaleX(0.9);transform-origin:0 0;">Language 7</div>
<div class="t" style="left:1045px;top:392.9px;font-size:17px;color:#000;transform:scaleX(0.9);transform-origin:0 0;">ko.json</div>
<div class="t" style="left:1045px;top:416.9px;font-size:17px;color:#000;transform:scaleX(0.9);transform-origin:0 0;">Korean</div>
<div class="t" style="left:1083.0px;top:440.9px;font-size:17px;color:#000;transform:translateX(-50%) scaleX(0.9);">1</div>
<div class="t" style="left:1129px;top:368.9px;font-size:17px;color:#000;transform:scaleX(0.9);transform-origin:0 0;">Language 7</div>
<div class="t" style="left:1129px;top:392.9px;font-size:17px;color:#000;transform:scaleX(0.9);transform-origin:0 0;">ko.json</div>
<div class="t" style="left:1129px;top:416.9px;font-size:17px;color:#000;transform:scaleX(0.9);transform-origin:0 0;">Korean</div>
<div class="t" style="left:1167.0px;top:440.9px;font-size:17px;color:#000;transform:translateX(-50%) scaleX(0.9);">2</div>
<div class="t" style="left:1213px;top:368.9px;font-size:17px;color:#000;transform:scaleX(0.9);transform-origin:0 0;">Language 7</div>
<div class="t" style="left:1213px;top:392.9px;font-size:17px;color:#000;transform:scaleX(0.9);transform-origin:0 0;">ko.json</div>
<div class="t" style="left:1213px;top:416.9px;font-size:17px;color:#000;transform:scaleX(0.9);transform-origin:0 0;">Korean</div>
<div class="t" style="left:1251.0px;top:440.9px;font-size:17px;color:#000;transform:translateX(-50%) scaleX(0.9);">3</div>
<div class="t" style="left:1297px;top:368.9px;font-size:17px;color:#000;transform:scaleX(0.9);transform-origin:0 0;">Language 7</div>
<div class="t" style="left:1297px;top:392.9px;font-size:17px;color:#000;transform:scaleX(0.9);transform-origin:0 0;">ko.json</div>
<div class="t" style="left:1297px;top:416.9px;font-size:17px;color:#000;transform:scaleX(0.9);transform-origin:0 0;">Korean</div>
<div class="t" style="left:1335.0px;top:440.9px;font-size:17px;color:#000;transform:translateX(-50%) scaleX(0.9);">4</div>
<div class="t" style="left:1381px;top:368.9px;font-size:17px;color:#000;transform:scaleX(0.9);transform-origin:0 0;">Language 7</div>
<div class="t" style="left:1381px;top:392.9px;font-size:17px;color:#000;transform:scaleX(0.9);transform-origin:0 0;">ko.json</div>
<div class="t" style="left:1381px;top:416.9px;font-size:17px;color:#000;transform:scaleX(0.9);transform-origin:0 0;">Korean</div>
<div class="t" style="left:1419.0px;top:440.9px;font-size:17px;color:#000;transform:translateX(-50%) scaleX(0.9);">5</div>
<div class="t" style="left:1465px;top:368.9px;font-size:17px;color:#000;transform:scaleX(0.9);transform-origin:0 0;">Language 7</div>
<div class="t" style="left:1465px;top:392.9px;font-size:17px;color:#000;transform:scaleX(0.9);transform-origin:0 0;">ko.json</div>
<div class="t" style="left:1465px;top:416.9px;font-size:17px;color:#000;transform:scaleX(0.9);transform-origin:0 0;">Korean</div>
<div class="t" style="left:1503.0px;top:440.9px;font-size:17px;color:#000;transform:translateX(-50%) scaleX(0.9);">6</div>
<div class="t" style="left:1549px;top:368.9px;font-size:17px;color:#000;transform:scaleX(0.9);transform-origin:0 0;">Language 7</div>
<div class="t" style="left:1549px;top:392.9px;font-size:17px;color:#000;transform:scaleX(0.9);transform-origin:0 0;">ko.json</div>
<div class="t" style="left:1549px;top:416.9px;font-size:17px;color:#000;transform:scaleX(0.9);transform-origin:0 0;">Korean</div>
<div class="t" style="left:1587.0px;top:440.9px;font-size:17px;color:#000;transform:translateX(-50%) scaleX(0.9);">7</div>
<div class="t" style="left:1633px;top:368.9px;font-size:17px;color:#000;transform:scaleX(0.9);transform-origin:0 0;">Language 7</div>
<div class="t" style="left:1633px;top:392.9px;font-size:17px;color:#000;transform:scaleX(0.9);transform-origin:0 0;">ko.json</div>
<div class="t" style="left:1633px;top:416.9px;font-size:17px;color:#000;transform:scaleX(0.9);transform-origin:0 0;">Korean</div>
<div class="t" style="left:1671.0px;top:440.9px;font-size:17px;color:#000;transform:translateX(-50%) scaleX(0.9);">8</div>
<div class="t" style="left:1717px;top:368.9px;font-size:17px;color:#000;transform:scaleX(0.9);transform-origin:0 0;">Language 7</div>
<div class="t" style="left:1717px;top:392.9px;font-size:17px;color:#000;transform:scaleX(0.9);transform-origin:0 0;">ko.json</div>
<div class="t" style="left:1717px;top:416.9px;font-size:17px;color:#000;transform:scaleX(0.9);transform-origin:0 0;">Korean</div>
<div class="t" style="left:1755.0px;top:440.9px;font-size:17px;color:#000;transform:translateX(-50%) scaleX(0.9);">9</div>
<div class="t" style="left:1801px;top:368.9px;font-size:17px;color:#000;transform:scaleX(0.9);transform-origin:0 0;">Language 7</div>
<div class="t" style="left:1801px;top:392.9px;font-size:17px;color:#000;transform:scaleX(0.9);transform-origin:0 0;">ko.json</div>
<div class="t" style="left:1801px;top:416.9px;font-size:17px;color:#000;transform:scaleX(0.9);transform-origin:0 0;">Korean</div>
<div class="t" style="left:1839.0px;top:440.9px;font-size:17px;color:#000;transform:translateX(-50%) scaleX(0.9);">10</div>
<div class="t" style="left:121px;top:464.9px;font-size:17px;color:#000;transform:scaleX(0.9);transform-origin:0 0;">{</div>
<div class="t" style="left:205px;top:488.9px;font-size:17px;color:#000;transform:scaleX(0.9);transform-origin:0 0;">"blockid": {</div>
<div class="t" style="left:289px;top:512.9px;font-size:17px;color:#000;transform:scaleX(0.9);transform-origin:0 0;">"air": "<span class=j>空気</span>",</div>
<div class="t" style="left:289px;top:536.9px;font-size:17px;color:#000;transform:scaleX(0.9);transform-origin:0 0;">"block": {</div>
<div class="t" style="left:373px;top:560.9px;font-size:17px;color:#000;transform:scaleX(0.9);transform-origin:0 0;">"category": {</div>
<div class="t" style="left:457px;top:584.9px;font-size:17px;color:#000;transform:scaleX(0.9);transform-origin:0 0;">"asphalt": "<span class=j>アスファルト</span>",</div>
<div class="t" style="left:457px;top:608.9px;font-size:17px;color:#000;transform:scaleX(0.9);transform-origin:0 0;">"bricks": "<span class=j>レンガ</span>",</div>
<div class="t" style="left:457px;top:632.9px;font-size:17px;color:#000;transform:scaleX(0.9);transform-origin:0 0;">"concrete": "<span class=j>コンクリート</span>",</div>
<div class="t" style="left:457px;top:656.9px;font-size:17px;color:#000;transform:scaleX(0.9);transform-origin:0 0;">"emissive": "<span class=j>光る</span>",</div>
<div class="t" style="left:457px;top:680.9px;font-size:17px;color:#000;transform:scaleX(0.9);transform-origin:0 0;">"empty": "<span class=j>空の</span>",</div>
<div class="t" style="left:457px;top:704.9px;font-size:17px;color:#000;transform:scaleX(0.9);transform-origin:0 0;">"fabric": "<span class=j>ファブリック</span>",</div>
<div class="t" style="left:457px;top:728.9px;font-size:17px;color:#000;transform:scaleX(0.9);transform-origin:0 0;">"glass": "<span class=j>ガラス</span>",</div>
<div class="t" style="left:457px;top:752.9px;font-size:17px;color:#000;transform:scaleX(0.9);transform-origin:0 0;">"loam": "<span class=j>ローム</span>",</div>
<div class="t" style="left:457px;top:776.9px;font-size:17px;color:#000;transform:scaleX(0.9);transform-origin:0 0;">"marble": "<span class=j>大理石</span>",</div>
<div class="t" style="left:457px;top:800.9px;font-size:17px;color:#000;transform:scaleX(0.9);transform-origin:0 0;">"metal": "<span class=j>金属</span>",</div>
<div class="t" style="left:457px;top:824.9px;font-size:17px;color:#000;transform:scaleX(0.9);transform-origin:0 0;">"misc": "<span class=j>その他</span>",</div>
<div class="t" style="left:457px;top:848.9px;font-size:17px;color:#000;transform:scaleX(0.9);transform-origin:0 0;">"natural": "<span class=j>自然</span>",</div>
<div class="t" style="left:457px;top:872.9px;font-size:17px;color:#000;transform:scaleX(0.9);transform-origin:0 0;">"plaster": "<span class=j>石膏</span>",</div>
<div class="t" style="left:457px;top:896.9px;font-size:17px;color:#000;transform:scaleX(0.9);transform-origin:0 0;">"roofing": "<span class=j>屋根葺き</span>",</div>
<div class="t" style="left:457px;top:920.9px;font-size:17px;color:#000;transform:scaleX(0.9);transform-origin:0 0;">"sandstone": "<span class=j>砂岩</span>",</div>
<div class="t" style="left:457px;top:944.9px;font-size:17px;color:#000;transform:scaleX(0.9);transform-origin:0 0;">"stone": "<span class=j>石</span>",</div>
<div class="t" style="left:457px;top:968.9px;font-size:17px;color:#000;transform:scaleX(0.9);transform-origin:0 0;">"stoneother": "<span class=j>その他の石</span>",</div>
<div class="t" style="left:457px;top:992.9px;font-size:17px;color:#000;transform:scaleX(0.9);transform-origin:0 0;">"tiles": "<span class=j>タイル</span>",</div>
<div class="t" style="left:1045px;top:464.9px;font-size:17px;color:#000;transform:scaleX(0.9);transform-origin:0 0;">{</div>
<div class="t" style="left:1129px;top:488.9px;font-size:17px;color:#000;transform:scaleX(0.9);transform-origin:0 0;">"blockid": {</div>
<div class="t" style="left:1213px;top:512.9px;font-size:17px;color:#000;transform:scaleX(0.9);transform-origin:0 0;">"air": "<span class=j>공기</span>",</div>
<div class="t" style="left:1213px;top:536.9px;font-size:17px;color:#000;transform:scaleX(0.9);transform-origin:0 0;">"block": {</div>
<div class="t" style="left:1297px;top:560.9px;font-size:17px;color:#000;transform:scaleX(0.9);transform-origin:0 0;">"category": {</div>
<div class="t" style="left:1381px;top:584.9px;font-size:17px;color:#000;transform:scaleX(0.9);transform-origin:0 0;">"asphalt": "<span class=j>아스팔트</span>",</div>
<div class="t" style="left:1381px;top:608.9px;font-size:17px;color:#000;transform:scaleX(0.9);transform-origin:0 0;">"bricks": "<span class=j>벽돌</span>",</div>
<div class="t" style="left:1381px;top:632.9px;font-size:17px;color:#000;transform:scaleX(0.9);transform-origin:0 0;">"concrete": "<span class=j>콘크리트</span>",</div>
<div class="t" style="left:1381px;top:656.9px;font-size:17px;color:#000;transform:scaleX(0.9);transform-origin:0 0;">"emissive": "<span class=j>총명한</span>",</div>
<div class="t" style="left:1381px;top:680.9px;font-size:17px;color:#000;transform:scaleX(0.9);transform-origin:0 0;">"empty": "<span class=j>비어 있는</span>",</div>
<div class="t" style="left:1381px;top:704.9px;font-size:17px;color:#000;transform:scaleX(0.9);transform-origin:0 0;">"fabric": "<span class=j>구조</span>",</div>
<div class="t" style="left:1381px;top:728.9px;font-size:17px;color:#000;transform:scaleX(0.9);transform-origin:0 0;">"glass": "<span class=j>유리</span>",</div>
<div class="t" style="left:1381px;top:752.9px;font-size:17px;color:#000;transform:scaleX(0.9);transform-origin:0 0;">"loam": "<span class=j>옥토</span>",</div>
<div class="t" style="left:1381px;top:776.9px;font-size:17px;color:#000;transform:scaleX(0.9);transform-origin:0 0;">"marble": "<span class=j>대리석</span>",</div>
<div class="t" style="left:1381px;top:800.9px;font-size:17px;color:#000;transform:scaleX(0.9);transform-origin:0 0;">"metal": "<span class=j>금속</span>",</div>
<div class="t" style="left:1381px;top:824.9px;font-size:17px;color:#000;transform:scaleX(0.9);transform-origin:0 0;">"misc": "<span class=j>기타</span>",</div>
<div class="t" style="left:1381px;top:848.9px;font-size:17px;color:#000;transform:scaleX(0.9);transform-origin:0 0;">"natural": "<span class=j>자연스러운</span>",</div>
<div class="t" style="left:1381px;top:872.9px;font-size:17px;color:#000;transform:scaleX(0.9);transform-origin:0 0;">"plaster": "<span class=j>벽토</span>",</div>
<div class="t" style="left:1381px;top:896.9px;font-size:17px;color:#000;transform:scaleX(0.9);transform-origin:0 0;">"roofing": "<span class=j>지붕 이기</span>",</div>
<div class="t" style="left:1381px;top:920.9px;font-size:17px;color:#000;transform:scaleX(0.9);transform-origin:0 0;">"sandstone": "<span class=j>사암</span>",</div>
<div class="t" style="left:1381px;top:944.9px;font-size:17px;color:#000;transform:scaleX(0.9);transform-origin:0 0;">"stone": "<span class=j>결석</span>",</div>
<div class="t" style="left:1381px;top:968.9px;font-size:17px;color:#000;transform:scaleX(0.9);transform-origin:0 0;">"stoneother": "<span class=j>다른 돌</span>",</div>
<div class="t" style="left:1381px;top:992.9px;font-size:17px;color:#000;transform:scaleX(0.9);transform-origin:0 0;">"tiles": "<span class=j>타일</span>",</div>
<div class="a" style="left:1796px;top:675px;width:87px;height:27px;border:2px solid #0e6b38"></div>
<div class="a" style="left:1879px;top:698px;width:7px;height:7px;background:#1e7a45;border:1px solid #fff"></div>
<div class="a" style="left:1897px;top:317px;width:21px;height:697px;background:#f5f5f5;border-radius:10px"></div>
<svg style="left:1902px;top:325px" width="11" height="8" viewBox="0 0 11 8"><path d="M5.5 0.5 L10.5 7.5 L0.5 7.5 Z" fill="#6e6e6e" stroke="#6e6e6e" stroke-linejoin="round"/></svg>
<div class="a" style="left:1902px;top:338px;width:11px;height:21px;background:#6e6e6e;border-radius:6px"></div>
<svg style="left:1902px;top:1000px" width="11" height="8" viewBox="0 0 11 8"><path d="M0.5 0.5 L10.5 0.5 L5.5 7.5 Z" fill="#6e6e6e" stroke="#6e6e6e" stroke-linejoin="round"/></svg>
<div class="a" style="left:133px;top:1012px;width:88px;height:12px;background:#fff"></div>
<div class="a" style="left:0px;top:1013px;width:141px;height:39px;background:#efefef;border-top-right-radius:8px;background:#ededed"></div>
<div class="a" style="left:213px;top:1013px;width:1707px;height:39px;background:#efefef;border-top-left-radius:8px;background:#ededed"></div>
<div class="a" style="left:0px;top:1030px;width:1920px;height:22px;background:#ededed"></div>
<svg style="left:31px;top:1024px" width="9" height="14" viewBox="0 0 9 14"><path d="M8 0.7 L1.5 7 L8 13.3" fill="none" stroke="#8a8a8a" stroke-width="1.2"/></svg>
<svg style="left:72px;top:1024px" width="9" height="14" viewBox="0 0 9 14"><path d="M1 0.7 L7.5 7 L1 13.3" fill="none" stroke="#8a8a8a" stroke-width="1.2"/></svg>
<div class="a" style="left:141px;top:1012px;width:72px;height:36px;background:#fff;border-radius:0 0 7px 7px;box-shadow:0 1px 1px rgba(0,0,0,.12)"></div>
<div class="t" style="left:177px;top:1021.3px;font-size:16.2px;color:#242424;transform:translateX(-50%);-webkit-text-stroke:0.3px #242424;">Sheet1</div>
<div class="a" style="left:151px;top:1041.5px;width:52px;height:2.5px;background:#107c41;border-radius:1px"></div>
<div class="a" style="left:218px;top:1020px;width:1px;height:24px;background:#c8c8c8"></div>
<svg style="left:271px;top:1024px" width="14" height="14" viewBox="0 0 14 14"><path d="M7 0 V14 M0 7 H14" stroke="#242424" stroke-width="1.4"/></svg>
<div class="a" style="left:1154.5px;top:1025px;width:3px;height:3px;background:#3a3a3a"></div>
<div class="a" style="left:1154.5px;top:1030px;width:3px;height:3px;background:#3a3a3a"></div>
<div class="a" style="left:1154.5px;top:1035px;width:3px;height:3px;background:#3a3a3a"></div>
<div class="a" style="left:1176px;top:1021px;width:721px;height:21px;background:#f5f5f5;border-radius:10px"></div>
<svg style="left:1182px;top:1026px" width="8" height="11" viewBox="0 0 8 11"><path d="M7.5 0.5 L0.5 5.5 L7.5 10.5 Z" fill="#6e6e6e" stroke="#6e6e6e" stroke-linejoin="round"/></svg>
<div class="a" style="left:1648px;top:1025px;width:146px;height:12px;background:#6e6e6e;border-radius:6px"></div>
<svg style="left:1882px;top:1026px" width="8" height="11" viewBox="0 0 8 11"><path d="M0.5 0.5 L7.5 5.5 L0.5 10.5 Z" fill="#6e6e6e" stroke="#6e6e6e" stroke-linejoin="round"/></svg>
<div class="a" style="left:0px;top:1052px;width:1920px;height:1px;background:#fbfbfb"></div>
<div class="a" style="left:0px;top:1053px;width:1920px;height:27px;background:#f3f3f3"></div>
<div class="t" style="left:14px;top:1060.4px;font-size:12.5px;color:#3a3a3a;">Ready</div>
<svg style="left:75px;top:1057px" width="18" height="18" viewBox="0 0 18 18"><circle cx="8" cy="2.6" r="1.9" fill="none" stroke="#242424" stroke-width="1.1"/><path d="M1 6 C4 7 12 7 15 5.5 M8 7 V11 L4.5 17 M8 11 L9.5 13" fill="none" stroke="#242424" stroke-width="1.2"/><path d="M11 12 L17 17.5 M17 12 L11 17.5" stroke="#242424" stroke-width="1.2"/></svg>
<div class="t" style="left:97px;top:1060.2px;font-size:12.7px;color:#242424;font-weight:700;">Accessibility: Investigate</div>
<div class="a" style="left:1548px;top:1053px;width:50px;height:26px;background:#dedede"></div>
<svg style="left:1563px;top:1056px" width="18" height="18" viewBox="0 0 18 18"><rect x="0.6" y="0.6" width="16.8" height="16.8" fill="none" stroke="#3a3a3a" stroke-width="1.2"/><path d="M6.2 0.6 V17.4 M11.8 0.6 V17.4 M0.6 6.2 H17.4 M0.6 11.8 H17.4" stroke="#3a3a3a" stroke-width="1.2"/></svg>
<svg style="left:1614px;top:1056px" width="18" height="18" viewBox="0 0 18 18"><rect x="0.6" y="0.6" width="16.8" height="16.8" fill="none" stroke="#3a3a3a" stroke-width="1.2"/><rect x="3.5" y="3.5" width="11" height="11" fill="none" stroke="#3a3a3a" stroke-width="1.1"/><path d="M5.5 6.5 H12.5 M5.5 9 H12.5 M5.5 11.5 H12.5" stroke="#3a3a3a" stroke-width="1"/></svg>
<svg style="left:1663px;top:1056px" width="18" height="18" viewBox="0 0 18 18"><rect x="0.6" y="0.6" width="16.8" height="16.8" fill="none" stroke="#3a3a3a" stroke-width="1.2"/><path d="M6 0.6 V10 H12 V0.6" fill="none" stroke="#3a3a3a" stroke-width="1.2"/></svg>
<div class="a" style="left:1703px;top:1065px;width:12px;height:1.2px;background:#3a3a3a"></div>
<div class="a" style="left:1721px;top:1065px;width:125px;height:1px;background:#8a8a8a"></div>
<div class="a" style="left:1780px;top:1057px;width:6px;height:16px;background:#5a5a5a;border-radius:1px"></div>
<svg style="left:1850px;top:1059px" width="12" height="12" viewBox="0 0 12 12"><path d="M6 0 V12 M0 6 H12" stroke="#3a3a3a" stroke-width="1.2"/></svg>
<div class="t" style="left:1878px;top:1060.4px;font-size:12.5px;color:#3a3a3a;">100%</div>
</body></html>
